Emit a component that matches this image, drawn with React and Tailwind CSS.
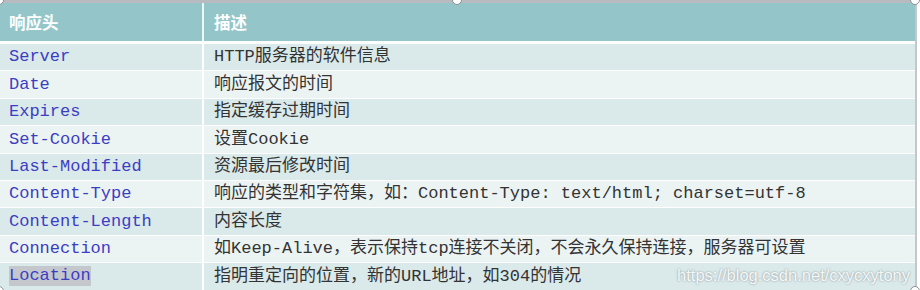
const ROWS = [
  ['Server', 'HTTP服务器的软件信息'],
  ['Date', '响应报文的时间'],
  ['Expires', '指定缓存过期时间'],
  ['Set-Cookie', '设置Cookie'],
  ['Last-Modified', '资源最后修改时间'],
  ['Content-Type', '响应的类型和字符集，如：Content-Type: text/html; charset=utf-8'],
  ['Content-Length', '内容长度'],
  ['Connection', '如Keep-Alive，表示保持tcp连接不关闭，不会永久保持连接，服务器可设置'],
  ['Location', '指明重定向的位置，新的URL地址，如304的情况'],
]

const MONO = "font-['Liberation_Mono','Noto_Sans_CJK_SC',monospace]"

function Handle({ className }) {
  return <div className={`absolute w-[10px] h-[10px] rounded-full bg-white border border-[#8a8f95] ${className}`} />
}

export default function App() {
  return (
    <div className="relative w-[920px] h-[290px] overflow-hidden bg-white">
      <div className="flex h-full">
        <div className="w-[915px] flex flex-col border-t-[3px] border-[#b7bbbf]">
          {/* header */}
          <div className="h-[38px] flex bg-[#94c6c9] flex-shrink-0">
            <div className="w-[202px] flex items-center pl-[9px] text-white font-bold text-[16.5px] font-['Noto_Sans_CJK_SC',sans-serif]">
              响应头
            </div>
            <div className="w-[2px] bg-[#eef7f7]" />
            <div className="flex-1 flex items-center pl-[10px] text-white font-bold text-[16.5px] font-['Noto_Sans_CJK_SC',sans-serif]">
              描述
            </div>
          </div>
          <div className="h-[3px] bg-white flex-shrink-0" />

          {/* rows */}
          <div className="flex flex-col gap-px">
            {ROWS.map(([name, desc], i) => (
              <div
                key={name}
                className={`h-[26.4px] flex flex-shrink-0 ${i % 2 === 0 ? 'bg-[#dae9ea]' : 'bg-[#ebf4f3]'}`}
              >
                <div className={`w-[202px] flex items-center pl-[9px] text-[17px] text-[#3d3dc4] ${MONO}`}>
                  <span className={name === 'Location' ? 'bg-[#c4c8cd] leading-[20px]' : ''}>{name}</span>
                </div>
                <div className="w-[2px] bg-white" />
                <div className={`flex-1 flex items-center pl-[10px] text-[17px] text-[#333333] whitespace-nowrap ${MONO}`}>
                  {desc}
                </div>
              </div>
            ))}
          </div>
        </div>
        <div className="w-[2px] bg-[#c3c7cb]" />
        <div className="flex-1 bg-white" />
      </div>

      {/* watermark */}
      <div className="absolute right-[10px] bottom-[2px] text-[16.5px] text-white/90 font-['Liberation_Sans',Arial,sans-serif] [text-shadow:0_0_2px_rgba(90,100,105,0.75)]">
        https://blog.csdn.net/cxycxytony
      </div>

      {/* selection handles */}
      <Handle className="-left-[6px] -top-[5px]" />
      <Handle className="left-[452px] -top-[5px]" />
      <Handle className="left-[910px] -top-[5px]" />
      <Handle className="-left-[6px] -bottom-[6px]" />
      <Handle className="left-[910px] -bottom-[6px]" />
    </div>
  )
}
